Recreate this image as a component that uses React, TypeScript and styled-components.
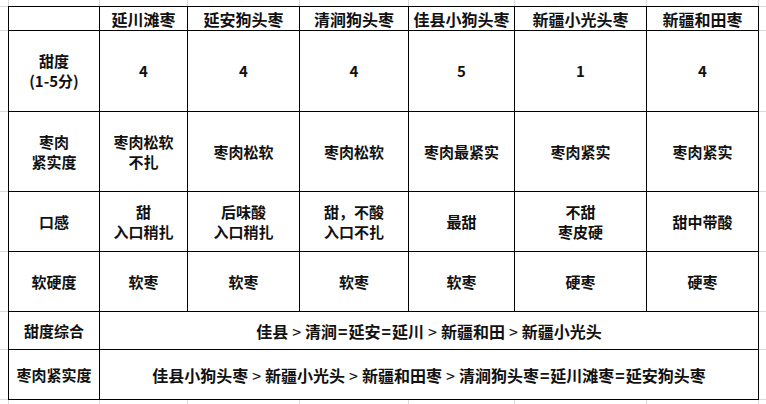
import React from 'react';
import styled, { createGlobalStyle } from 'styled-components';

const GlobalStyle = createGlobalStyle`
  html, body {
    margin: 0;
    padding: 0;
    background: #fff;
  }
`;

// sheet grid: page margins around the table + one track per table column / row
const Sheet = styled.div`
  display: grid;
  grid-template-columns: 8px 90px 87px 111px 108px 105px 131px 111px 7px;
  grid-template-rows: 6px 23px 80px 79px 59px 59px 37px 49px 4px;
  gap: 1px;
  width: 766px;
  height: 404px;
  background: #d9d9d9;
  font-family: "Noto Sans CJK SC", "Liberation Sans", sans-serif;
  color: #111;
`;

const Blank = styled.div`
  background: #fff;
`;

const Cell = styled.div<{ $size?: number; $span?: number }>`
  grid-column: span ${p => p.$span ?? 1};
  display: flex;
  align-items: center;
  justify-content: center;
  text-align: center;
  white-space: pre-line;
  background: #fff;
  box-shadow: 0 0 0 1px #000;
  font-size: ${p => p.$size ?? 15}px;
  line-height: 20px;
  font-weight: 700;
`;

const Sep = styled.span`
  font-weight: 400;
  margin: 0 4px;
`;

const Eq = styled.span`
  margin: 0 1px;
`;

const varieties = ['延川滩枣', '延安狗头枣', '清涧狗头枣', '佳县小狗头枣', '新疆小光头枣', '新疆和田枣'];

const rows: { label: string; values: string[] }[] = [
  { label: '甜度\n(1-5分)', values: ['4', '4', '4', '5', '1', '4'] },
  {
    label: '枣肉\n紧实度',
    values: ['枣肉松软\n不扎', '枣肉松软', '枣肉松软', '枣肉最紧实', '枣肉紧实', '枣肉紧实'],
  },
  {
    label: '口感',
    values: ['甜\n入口稍扎', '后味酸\n入口稍扎', '甜，不酸\n入口不扎', '最甜', '不甜\n枣皮硬', '甜中带酸'],
  },
  { label: '软硬度', values: ['软枣', '软枣', '软枣', '软枣', '硬枣', '硬枣'] },
];

const summaries: { label: string; order: string[][] }[] = [
  { label: '甜度综合', order: [['佳县'], ['清涧', '延安', '延川'], ['新疆和田'], ['新疆小光头']] },
  {
    label: '枣肉紧实度',
    order: [['佳县小狗头枣'], ['新疆小光头'], ['新疆和田枣'], ['清涧狗头枣', '延川滩枣', '延安狗头枣']],
  },
];

const Ranking: React.FC<{ order: string[][] }> = ({ order }) => (
  <span>
    {order.map((group, i) => (
      <React.Fragment key={i}>
        {i > 0 && <Sep>&gt;</Sep>}
        {group.map((name, j) => (
          <React.Fragment key={name}>
            {j > 0 && <Eq>=</Eq>}
            {name}
          </React.Fragment>
        ))}
      </React.Fragment>
    ))}
  </span>
);

const marginRow = (key: string) =>
  Array.from({ length: 9 }, (_, i) => <Blank key={`${key}-${i}`} />);

export default function App() {
  return (
    <>
      <GlobalStyle />
      <Sheet>
        {marginRow('top')}

        <Blank />
        <Cell />
        {varieties.map(v => (
          <Cell key={v} $size={16}>
            {v}
          </Cell>
        ))}
        <Blank />

        {rows.map(row => (
          <React.Fragment key={row.label}>
            <Blank />
            <Cell>{row.label}</Cell>
            {row.values.map((v, i) => (
              <Cell key={i}>{v}</Cell>
            ))}
            <Blank />
          </React.Fragment>
        ))}

        {summaries.map(s => (
          <React.Fragment key={s.label}>
            <Blank />
            <Cell>{s.label}</Cell>
            <Cell $span={6} $size={16}>
              <Ranking order={s.order} />
            </Cell>
            <Blank />
          </React.Fragment>
        ))}

        {marginRow('bottom')}
      </Sheet>
    </>
  );
}
